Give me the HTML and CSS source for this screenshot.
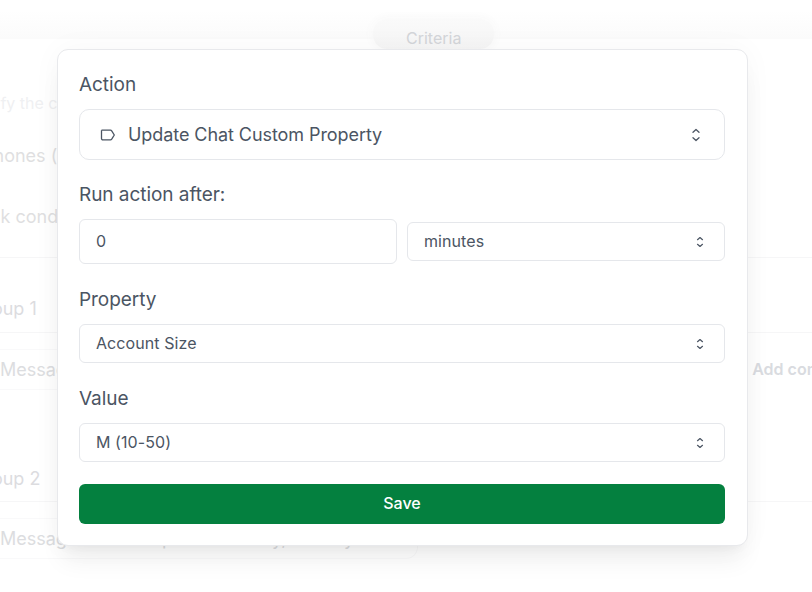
FILE: index.html
```html
<!DOCTYPE html>
<html lang="en">
<head>
<meta charset="utf-8">
<title>Action</title>
<link rel="stylesheet" href="styles.css">
</head>
<body>
<div class="page">
  <header class="topbar"><span class="tab">Criteria</span></header>
  <p class="hint">Specify the criteria</p>
  <p class="line phones">Phones (</p>
  <p class="line cond">Check conditions</p>
  <section class="group first">
    <h3 class="group-title">Group 1</h3>
    <div class="row">
      <span class="pill">Message</span>
      <span class="add">Add condition</span>
    </div>
  </section>
  <section class="group second">
    <h3 class="group-title">Group 2</h3>
    <div class="row">
      <span class="pill wide">Message<span class="tail">p</span><span class="tail t2">y,</span><span class="tail t3">y</span></span>
    </div>
  </section>
</div>

<div class="modal">
  <div class="field f-action">
    <label class="label">Action</label>
    <div class="select big">
      <svg class="tag" viewBox="0 0 16 12" width="16" height="12" fill="none" stroke="currentColor" stroke-width="1.3" stroke-linejoin="round"><path d="M1.500 1.200h9c.5 0 .9.2 1.200.6l2.600 4.200-2.600 4.200c-.3.4-.7.600-1.200.600H2.800c-.7 0-1.300-.5-1.300-1.200V1.200"/></svg>
      <span class="value">Update Chat Custom Property</span>
      <svg class="chev big-chev" viewBox="0 0 12 14" width="12" height="14" fill="none" stroke="currentColor" stroke-width="1.3" stroke-linecap="round" stroke-linejoin="round"><path d="M3 4.200 6 1.500l3 2.700M3 9.800l3 2.700 3-2.700"/></svg>
    </div>
  </div>
  <div class="field f-run">
    <label class="label">Run action after:</label>
    <div class="split">
      <input class="input" type="text" value="0">
      <div class="select small">
        <span class="value">minutes</span>
        <svg class="chev" viewBox="0 0 12 14" width="12" height="14" fill="none" stroke="currentColor" stroke-width="1.2" stroke-linecap="round" stroke-linejoin="round"><path d="M3.500 4.700 6 2.500l2.500 2.200M3.500 9.300 6 11.500l2.500-2.200"/></svg>
      </div>
    </div>
  </div>
  <div class="field f-prop">
    <label class="label">Property</label>
    <div class="select small">
      <span class="value">Account Size</span>
      <svg class="chev" viewBox="0 0 12 14" width="12" height="14" fill="none" stroke="currentColor" stroke-width="1.2" stroke-linecap="round" stroke-linejoin="round"><path d="M3.500 4.700 6 2.500l2.500 2.200M3.500 9.300 6 11.500l2.500-2.200"/></svg>
    </div>
  </div>
  <div class="field f-value">
    <label class="label">Value</label>
    <div class="select small">
      <span class="value">M (10-50)</span>
      <svg class="chev" viewBox="0 0 12 14" width="12" height="14" fill="none" stroke="currentColor" stroke-width="1.2" stroke-linecap="round" stroke-linejoin="round"><path d="M3.500 4.700 6 2.500l2.500 2.200M3.500 9.300 6 11.500l2.500-2.200"/></svg>
    </div>
  </div>
  <button class="save" type="button">Save</button>
</div>
</body>
</html>
```
FILE: styles.css
```css
* { box-sizing: border-box; }
html, body { margin: 0; height: 100%; }
body {
  width: 812px;
  height: 592px;
  overflow: hidden;
  background: #fff;
  font-family: Inter, "Liberation Sans", sans-serif;
  position: relative;
}
.page { height: 592px; overflow: hidden; color: #dcdcdf; }
.topbar {
  height: 39px;
  background: linear-gradient(#fff 0, #fff 10px, #fbfbfb 39px);
  display: flex;
  justify-content: flex-start;
  padding-left: 373px;
}
.tab {
  height: 30px;
  margin-top: 19px;
  padding: 10px 33px 0;
  line-height: 19px;
  font-size: 16px;
  color: #d3d5d9;
  background: linear-gradient(#fafafa, #f5f5f5);
  border-radius: 14px;
  box-shadow: 0 0 10px 2px #f9f9f9;
}
.hint { margin: 54px 0 0 -42px; font-size: 16px; line-height: 20px; color: #eff0f2; white-space: nowrap; }
.line { margin: 0; font-size: 18px; line-height: 24px; color: #dfdfe1; white-space: nowrap; }
.phones { margin: 31px 0 0 -18px; }
.cond { margin: 37px 0 0 -44px; }
.group { border-top: 1px solid #f6f6f7; }
.first { margin-top: 28px; height: 245px; }
.second { height: 90px; border-top: 0; }
.group-title {
  margin: 0;
  font-size: 18px;
  font-weight: 400;
  line-height: 24px;
  color: #dcdcdf;
  margin-left: -28px;
}
.first .group-title { padding-top: 39px; height: 74px; }
.second .group-title { height: 24px; margin-top: -35px; margin-bottom: 10px; }
.row { border-top: 1px solid #f6f6f7; padding-top: 16px; display: flex; justify-content: space-between; height: 58px; }
.pill {
  height: 41px;
  width: 418px;
  border: 1px solid #f9f9fa;
  border-left: 0;
  border-radius: 0 12px 12px 0;
  font-size: 18px;
  line-height: 39px;
  color: #dcdde0;
  position: relative;
  white-space: nowrap;
}
.add { font-size: 16px; font-weight: 600; color: #d9dbe0; line-height: 41px; margin-left: auto; margin-right: -48px; white-space: nowrap; }
.tail { position: absolute; left: 162px; top: 0; }
.t2 { left: 272px; }
.t3 { left: 344px; }

.modal {
  position: absolute;
  left: 57px;
  top: 49px;
  width: 691px;
  height: 497px;
  background: #fff;
  border: 1px solid #e8e9ec;
  border-radius: 11px;
  padding: 23px 22px 0 21px;
  box-shadow: 0 20px 25px -5px rgba(0,0,0,.06), 0 8px 10px -6px rgba(0,0,0,.04), 0 0 30px rgba(0,0,0,.035);
  color: #4b5563;
}
.field { display: flex; flex-direction: column; }
.label { font-size: 19px; line-height: 24px; height: 24px; color: #4b5563; letter-spacing: -.05px; }
.select, .input {
  display: flex;
  align-items: center;
  background: #fff;
  border: 1px solid #e5e7eb;
  color: #4b5563;
  font-family: inherit;
}
.select.big {
  height: 51px;
  margin-top: 12px;
  border-radius: 10px;
  font-size: 18px;
  padding: 0 22px 0 20px;
}
.select.small {
  height: 39px;
  border-radius: 6px;
  font-size: 16px;
  padding: 0 18px 0 16px;
}
.small .value { padding-bottom: 2px; letter-spacing: .08px; }
.value { flex: 1; white-space: nowrap; }
.big .value { letter-spacing: -.07px; }
.tag { margin-right: 12px; flex: none; }
.chev { flex: none; }
.f-run { margin-top: 23px; }
.split { display: grid; grid-template-columns: 1fr 1fr; gap: 10px; align-items: center; margin-top: 12px; }
.input { width: 100%; min-width: 0; height: 45px; border-radius: 6px; font-size: 16px; padding: 0 16px 2px; outline: none; }
.split .select { min-width: 0; }
.f-prop { margin-top: 24px; }
.f-prop .select, .f-value .select { margin-top: 12px; }
.f-value { margin-top: 24px; }
.save {
  display: block;
  width: 100%;
  height: 40px;
  margin-top: 22px;
  padding: 0 0 2px;
  background: #04803f;
  color: #fff;
  border: 0;
  border-radius: 6px;
  font: 500 16px Inter, "Liberation Sans", sans-serif;
}
```
